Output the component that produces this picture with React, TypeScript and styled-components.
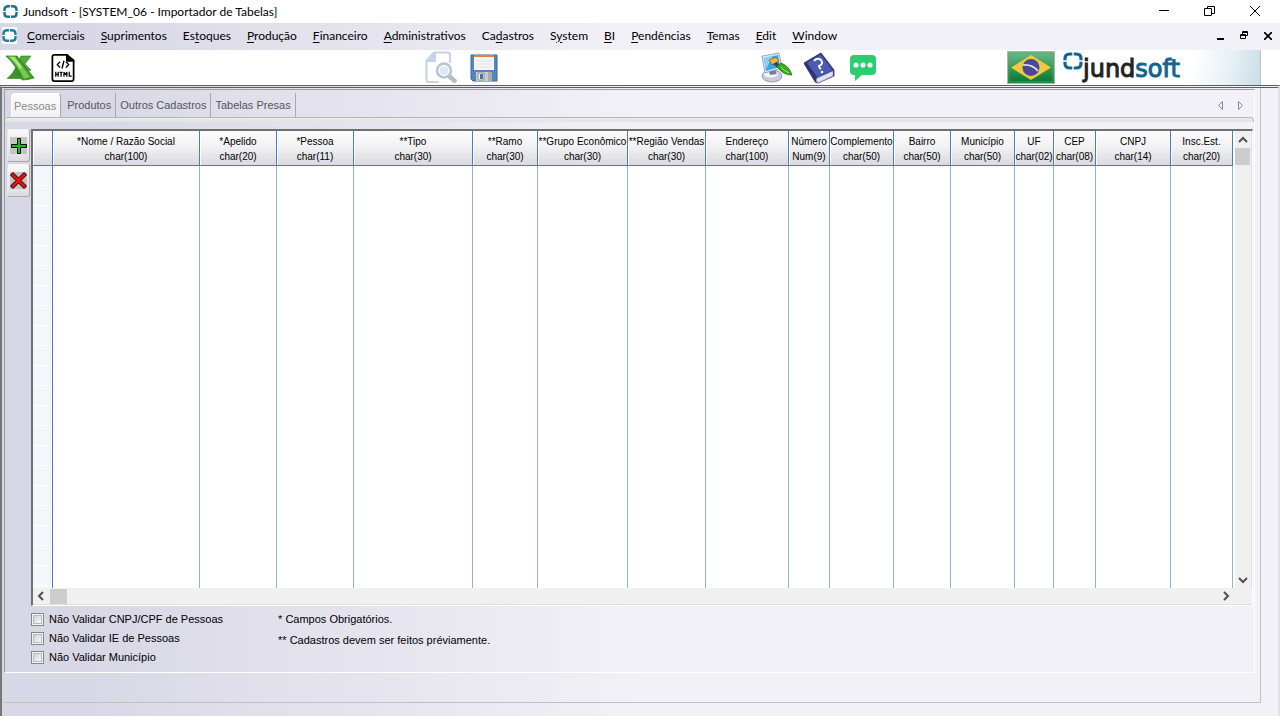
import React from "react";
import styled, { createGlobalStyle } from "styled-components";

const GlobalStyle = createGlobalStyle`
  *, *::before, *::after { box-sizing: border-box; }
  body { margin: 0; background: #f2f1f7; color: #000; }
  button { font: inherit; color: inherit; padding: 0; border: 0; background: none; }
  svg { display: block; }
`;

const uiFont = `Lato, "Noto Sans", sans-serif`;
const gridFont = `"Liberation Sans", Arial, sans-serif`;
const lavender = `linear-gradient(90deg, #d8d7e5 0, #d8d7e5 80px, #f2f1f7 640px)`;

const Page = styled.div`
  display: flex;
  flex-direction: column;
  height: 100vh;
  min-height: 400px;
  overflow: hidden;
`;

const TitleBar = styled.header`
  display: flex;
  align-items: center;
  height: 23px;
  flex: none;
  padding: 0 20px 0 3px;
  gap: 5px;
  background: #fff;
  font: 12px/16px ${uiFont};
`;

const Title = styled.h1`
  flex: 1;
  margin: 0;
  font: inherit;
`;

const WindowButtons = styled.div<{ $gap: number }>`
  display: flex;
  align-items: center;
  gap: ${(p) => p.$gap}px;
`;

const MenuBar = styled.nav`
  display: flex;
  align-items: center;
  height: 27px;
  flex: none;
  padding: 0 8px 2px 2px;
  background: ${lavender};
  font: 12px/16px ${uiFont};
`;

const MenuIcon = styled.span`
  padding: 1px 0;
  background: #fff;
`;

const MenuList = styled.div`
  display: flex;
  flex: 1;
  gap: 16px;
  padding-left: 10px;
`;

const MenuButton = styled.button`
  white-space: nowrap;
  u { text-underline-offset: 2px; }
`;

const ToolBar = styled.div`
  display: grid;
  grid-template-columns: 425fr 336fr 246fr 254px;
  height: 35px;
  flex: none;
  padding-right: 19px;
  background: #fff;
`;

const ToolGroup = styled.div<{ $gap: number; $pad?: number }>`
  display: flex;
  align-items: center;
  gap: ${(p) => p.$gap}px;
  padding-left: ${(p) => p.$pad ?? 0}px;
`;

const Brand = styled.div`
  display: flex;
  align-items: center;
  gap: 8px;
  border-right: 1px solid #c0c0c0;
  background: linear-gradient(100deg, transparent 72%, #e6f0f4 88%, #c8dde6 100%);
`;

const Logo = styled.div`
  display: flex;
  align-items: flex-start;
  height: 33px;
`;

const LogoText = styled.span`
  padding-top: 3px;
  font: 24px/30px "DejaVu Sans", sans-serif;
  color: #222;
  -webkit-text-stroke: 1px #222;
  b { font-weight: 400; color: #13658f; -webkit-text-stroke: 1px #13658f; }
`;

const Workspace = styled.main`
  display: flex;
  flex: 1;
  min-height: 0;
  padding: 0 17px 13px 2px;
  border-top: 3px double #5c5f5e;
  border-left: 2px solid #777;
  border-right: 2px solid #e2e2e6;
  background: ${lavender};
`;

const Outer = styled.div`
  display: flex;
  flex: 1;
  min-width: 0;
  padding: 1px 5px 29px 0;
  border-right: 1px solid #c0c0c0;
  border-bottom: 1px solid #c0c0c0;
`;

const Panel = styled.section`
  display: flex;
  flex-direction: column;
  flex: 1;
  min-width: 0;
  border: 1px solid #9d9da2;
  border-right-color: #fff;
  border-bottom-color: #fff;
`;

const TabStrip = styled.div`
  display: flex;
  align-items: flex-end;
  height: 27px;
  flex: none;
  padding: 0 9px 0 6px;
  font: 11px/14px ${gridFont};
`;

const Tab = styled.button<{ $active?: boolean }>`
  height: 24px;
  padding: 0 4px 0 ${(p) => (p.$active ? 2 : 4)}px;
  margin-right: ${(p) => (p.$active ? 2 : 0)}px;
  border-right: 1px solid #a9a9ad;
  color: ${(p) => (p.$active ? "#8d8a80" : "#55555a")};
  white-space: nowrap;
  ${(p) =>
    p.$active &&
    `border-radius: 4px 4px 0 0; border-top: 1px solid #fff; border-left: 1px solid #fff;
     background: linear-gradient(#fdfdfd, #f1f1f3); box-shadow: 1px 0 0 #d8d8dc;`}
`;

const TabArrows = styled.div`
  display: flex;
  gap: 12px;
  margin-left: auto;
  height: 24px;
  align-items: center;
`;

const TabLine = styled.div`
  height: 5px;
  flex: none;
  border-top: 1px solid #b6b6ba;
  border-right: 1px solid #b6b6ba;
  border-radius: 3px 4px 0 0;
  background: linear-gradient(#ececee, #e2e2e4);
`;

const GridArea = styled.div`
  display: flex;
  flex: 1;
  min-height: 0;
  padding: 7px 1px 0 2px;
`;

const SideButtons = styled.div`
  display: flex;
  flex-direction: column;
  gap: 2px;
  width: 24px;
  padding-right: 1px;
  flex: none;
`;

const SideButton = styled.button`
  display: flex;
  align-items: center;
  justify-content: center;
  height: 33px;
  border: 1px solid #a9a9ad;
  border-top-color: #f4f4f4;
  border-left-color: #e8e8ea;
  border-radius: 3px;
  background: linear-gradient(#f8f8f8, #e9e9ea 60%, #dcdcde);
  svg { background: #c4c4c6; }
`;

const GridFrame = styled.div`
  display: grid;
  grid-template-columns: minmax(0, 1fr) 17px;
  grid-template-rows: minmax(0, 1fr) 17px;
  flex: 1;
  min-width: 0;
  border-style: solid;
  border-width: 2px 1px 1px 2px;
  border-color: #6f6f6f #fff #fff #6f6f6f;
  background: #fff;
`;

const TableClip = styled.div`
  overflow: hidden;
`;

const Table = styled.table`
  table-layout: fixed;
  width: 1200px;
  border-collapse: separate;
  border-spacing: 0;
  font: 10px/15px ${gridFont};
`;

const HeadCell = styled.th`
  height: 35px;
  padding: 1px 0 0;
  border-right: 1px solid #4a7dbd;
  border-bottom: 1px solid #4a7dbd;
  background: linear-gradient(#fcfcfc, #f2f2f4 45%, #d8dade);
  box-shadow: inset 1px 0 0 #fff;
  font-weight: 400;
  text-align: center;
  white-space: pre;
`;

const Cell = styled.td<{ $marker?: boolean }>`
  height: 20px;
  padding: 0;
  border-right: 1px solid ${(p) => (p.$marker ? "#4a7dbd" : "#93b1d8")};
  background: ${(p) => (p.$marker ? "linear-gradient(#f3f7fc 19px, #fff 19px)" : "#fff")};
`;

const ScrollTrack = styled.div<{ $vertical?: boolean }>`
  display: flex;
  align-items: center;
  flex-direction: ${(p) => (p.$vertical ? "column" : "row")};
  grid-column: ${(p) => (p.$vertical ? "2" : "1 / 3")};
  padding-right: ${(p) => (p.$vertical ? 1 : 18)}px;
  background: #f0f0f0;
  ${(p) => (p.$vertical ? "border-right: 1px solid #e0e0e0;" : "border-bottom: 1px solid #e0e0e0;")}
`;

const ScrollArrow = styled.button`
  display: flex;
  align-items: center;
  justify-content: center;
  width: 17px;
  height: 17px;
  flex: none;
`;

const Thumb = styled.div<{ $vertical?: boolean }>`
  width: ${(p) => (p.$vertical ? 15 : 17)}px;
  height: ${(p) => (p.$vertical ? 17 : 15)}px;
  background: #cdcdcd;
`;

const Spacer = styled.div`
  flex: 1;
`;

const Footer = styled.footer`
  display: flex;
  height: 66px;
  flex: none;
  gap: 55px;
  padding: 6px 0 0 26px;
  font: 11px/14px ${gridFont};
`;

const Options = styled.div`
  display: flex;
  flex-direction: column;
  gap: 5px;
`;

const Option = styled.label`
  display: flex;
  align-items: center;
  gap: 5px;
  white-space: nowrap;
`;

const Check = styled.input`
  appearance: none;
  width: 13px;
  height: 13px;
  margin: 0;
  border: 1px solid #85878b;
  background: linear-gradient(135deg, #c3c6cf, #f8f8f8 80%);
  box-shadow: inset 0 0 0 1px #f4f4f4, inset 0 0 0 2px #b8bac2;
`;

const Notes = styled.div`
  display: flex;
  flex-direction: column;
  gap: 7px;
  p { margin: 0; white-space: nowrap; }
`;

const Ring = ({ size, color }: { size: number; color: string }) => (
  <svg width={size} height={size} viewBox="0 0 20 20" fill="none" stroke={color} strokeWidth="3.2">
    <path d="M9.300 3H7Q2 3 2 7.500V9.300M10.700 3H13Q18 3 18 7.500V9.300M2 10.700v1.800q0 4.500 5 4.500H9.300M18 10.700v1.800q0 4.500-5 4.500H10.700" />
  </svg>
);

const ExcelIcon = () => (
  <svg width="28" height="26" viewBox="0 0 28 26">
    <path d="M15 1h10l-6 8 6 6-5 2-9-9z" fill="#55a93c" stroke="#2c7d1f" strokeWidth=".6" />
    <path d="M10 12l7 8-2 3.500H1Q7 19 10 12z" fill="#3c9429" stroke="#2c7d1f" strokeWidth=".6" />
    <path d="M0 1h11l17 22q-6 2-12 2Q10 10 0 1z" fill="#3f9f2b" stroke="#237a1a" strokeWidth=".7" />
    <path d="M2 1.500h7l15 20.500-6 1.500Q12 10 2 1.500z" fill="#7cc654" />
    <path d="M4 2h4l8 10-2 2Q9 6 4 2z" fill="#b4e48e" />
  </svg>
);

const HtmlIcon = () => (
  <svg width="24" height="28" viewBox="0 0 24 29" fill="none" stroke="#000" strokeWidth="1.800" strokeLinejoin="round">
    <path d="M3 1h13l7 6v19q0 2-2 2H3q-2 0-2-2V3q0-2 2-2z" />
    <path d="M16 1v6h7z" fill="#000" />
    <path d="M9 8l-3 3 3 3M15 8l3 3-3 3M13 7l-2 8" strokeWidth="1.400" />
    <path d="M4.500 18.500v5M7 18.500v5M4.500 21H7M8.500 19h3M10 19v4.500M13 23.500V19l1.500 2L16 19v4.500M18.500 18.500V23H21" strokeWidth="1.300" />
  </svg>
);

const PreviewIcon = () => (
  <svg width="32" height="33" viewBox="0 0 32 33" fill="none">
    <path d="M9 1.500h14q2 0 2 2V12M14 31H3.500q-2 0-2-2V10L9 1.500" stroke="#c5d4e8" strokeWidth="2.200" />
    <path d="M11 1v10H1z" fill="#c5d4e8" />
    <path d="M24 25l7 6" stroke="#b4bdc4" strokeWidth="4.500" />
    <circle cx="19" cy="19.500" r="7" fill="#dce8f6" stroke="#bdc5cc" strokeWidth="2.600" />
    <circle cx="19" cy="19.500" r="5" stroke="#fff" strokeWidth="1" />
  </svg>
);

const SaveIcon = () => (
  <svg width="28" height="28" viewBox="0 0 28 28">
    <path d="M1 1h26v26H3l-2-2z" fill="#5584bf" stroke="#3d669e" />
    <path d="M4 1h20v15H4z" fill="#f5f5f5" />
    <path d="M4 1h20v2H4z" fill="#f08020" />
    <path d="M6 7h16M6 10h16M6 13h16" stroke="#e2e4e6" />
    <path d="M6 18h16v9H6z" fill="#c9ccc8" />
    <path d="M8 19h6v7H8z" fill="#eef" stroke="#777" strokeWidth=".7" />
    <path d="M10 20h3v5h-3z" fill="#48719f" />
    <path d="M18 18h4v9h-4z" fill="#aaaea9" />
  </svg>
);

const PaintIcon = () => (
  <svg width="32" height="31" viewBox="0 0 32 31">
    <ellipse cx="11" cy="24" rx="10" ry="6" fill="#c9cadc" stroke="#85869e" strokeWidth=".8" />
    <ellipse cx="10" cy="22" rx="7" ry="3.500" fill="#f5f5fc" />
    <path d="M8 19l6-1 2 4-7 1z" fill="#777a98" />
    <path d="M1 4l17-3 3 15-17 5z" fill="#dae9f5" stroke="#78889a" strokeWidth=".7" />
    <path d="M3 6l14-3 2 12-14 4z" fill="#37a6ee" />
    <path d="M3 6l9-2-7 13z" fill="#85d1ff" />
    <path d="M8 8l7-3 3 4-7 4z" fill="#e4b64a" stroke="#8b5d18" strokeWidth=".8" />
    <path d="M12 12l4-2 3 4-2 2z" fill="#37424f" />
    <path d="M16 14l4-3q8 3 11 12-10 0-15-9z" fill="#3cac20" stroke="#1b6e12" strokeWidth=".8" />
    <path d="M20 15q3 4 8 6" stroke="#a4ea78" fill="none" />
  </svg>
);

const BookIcon = () => (
  <svg width="32" height="32" viewBox="0 0 32 32">
    <path d="M1 11L18 1l13 17v6L15 31q-3 0-4-3z" fill="#35408f" stroke="#23295f" strokeWidth=".8" />
    <path d="M14 26l16-7v5l-15 7q-3-2-1-5z" fill="#e0e2ef" stroke="#8086a8" strokeWidth=".6" />
    <path d="M4 11L18 3l11 15-15 7z" fill="#4e5bb2" />
    <path d="M1 12l3-1 10 14q-3 2-1 5z" fill="#2b347c" />
    <path d="M11 9q3-4 7-1 3 4-2 6 0 2 2 3" fill="none" stroke="#fff" strokeWidth="2" />
    <circle cx="19" cy="20" r="1.300" fill="#fff" />
  </svg>
);

const ChatIcon = () => (
  <svg width="26" height="26" viewBox="0 0 26 26">
    <path d="M4 0h18q4 0 4 4v12q0 4-4 4H12l-7 6v-6H4q-4 0-4-4V4q0-4 4-4z" fill="#2ecc71" />
    <g fill="#ecf0f1">
      <circle cx="6" cy="10" r="2.600" />
      <circle cx="13" cy="10" r="2.600" />
      <circle cx="20" cy="10" r="2.600" />
    </g>
  </svg>
);

const FlagIcon = () => (
  <svg width="48" height="33" viewBox="0 0 48 33">
    <defs>
      <linearGradient id="green" x1="0" y1="0" x2="0" y2="1">
        <stop offset="0" stopColor="#6fbb8b" />
        <stop offset=".5" stopColor="#379a56" />
        <stop offset=".9" stopColor="#0c7c34" />
      </linearGradient>
    </defs>
    <path d="M.5.500h47v32H.500z" fill="url(#green)" stroke="#a9b5ad" />
    <path d="M2 2h44v29H2z" fill="none" stroke="#51a871" strokeWidth=".8" />
    <path d="M4 16.500L24 4l20 12.500L24 29z" fill="#f0ca3c" />
    <circle cx="24" cy="16.500" r="8.500" fill="#49489b" />
    <path d="M16 14q9-1 15 6" stroke="#dfe2f2" strokeWidth="1.600" fill="none" />
  </svg>
);

const Minimize = ({ bold }: { bold?: boolean }) => (
  <svg width={bold ? 7 : 10} height="10" stroke="#000" strokeWidth={bold ? 2 : 1}>
    <path d={bold ? "M0 8h7" : "M0 3.500h10"} />
  </svg>
);

const Restore = ({ bold }: { bold?: boolean }) =>
  bold ? (
    <svg width="8" height="10" fill="none" stroke="#000">
      <path d="M2.500 3V.500h5v4H6M2 1.500h6M.500 3.500h5v4h-5zM0 4.500h6" />
    </svg>
  ) : (
    <svg width="11" height="12" fill="none" stroke="#000">
      <path d="M3.500 2.500V.500h7v7H8M.500 2.500h7v7h-7z" />
    </svg>
  );

const Close = ({ bold }: { bold?: boolean }) => (
  <svg width={bold ? 8 : 10} height={bold ? 8 : 12} viewBox={bold ? "0 0 10 10" : "0 0 10 12"} stroke="#000" strokeWidth={bold ? 2.200 : 1}>
    <path d="M0 0l10 10M10 0L0 10" />
  </svg>
);

const arrows: Record<string, string> = {
  up: "M1 7l4-4 4 4",
  down: "M1 3l4 4 4-4",
  left: "M6 1L2 5l4 4",
  right: "M3 1l4 4-4 4",
};

const Chevron = ({ dir }: { dir: string }) => (
  <svg width="10" height="10" fill="none" stroke="#505050" strokeWidth="2">
    <path d={arrows[dir]} />
  </svg>
);

// Each label is split around its underlined access key.
const menus = [
  ["", "C", "omerciais"],
  ["", "S", "uprimentos"],
  ["Es", "t", "oques"],
  ["", "P", "rodução"],
  ["", "F", "inanceiro"],
  ["", "A", "dministrativos"],
  ["Ca", "d", "astros"],
  ["S", "y", "stem"],
  ["", "B", "I"],
  ["", "P", "endências"],
  ["", "T", "emas"],
  ["", "E", "dit"],
  ["", "W", "indow"],
];

const columns: [string, string, number][] = [
  ["*Nome / Razão Social", "char(100)", 147],
  ["*Apelido", "char(20)", 77],
  ["*Pessoa", "char(11)", 77],
  ["**Tipo", "char(30)", 119],
  ["**Ramo", "char(30)", 65],
  ["**Grupo Econômico", "char(30)", 90],
  ["**Região Vendas", "char(30)", 78],
  ["Endereço", "char(100)", 83],
  ["Número", "Num(9)", 41],
  ["Complemento", "char(50)", 64],
  ["Bairro", "char(50)", 57],
  ["Município", "char(50)", 64],
  ["UF", "char(02)", 39],
  ["CEP", "char(08)", 42],
  ["CNPJ", "char(14)", 75],
  ["Insc.Est.", "char(20)", 62],
];

const rows = Array.from({ length: 60 }, (_, i) => i);
const tabs = ["Pessoas", "Produtos", "Outros Cadastros", "Tabelas Presas"];
const options = ["Não Validar CNPJ/CPF de Pessoas", "Não Validar IE de Pessoas", "Não Validar Município"];

export default function App() {
  return (
    <Page>
      <GlobalStyle />
      <TitleBar>
        <Ring size={15} color="#1d6f94" />
        <Title>Jundsoft - [SYSTEM_06 - Importador de Tabelas]</Title>
        <WindowButtons $gap={35}>
          <button aria-label="Minimizar"><Minimize /></button>
          <button aria-label="Restaurar"><Restore /></button>
          <button aria-label="Fechar"><Close /></button>
        </WindowButtons>
      </TitleBar>
      <MenuBar>
        <MenuIcon><Ring size={15} color="#1d7f9c" /></MenuIcon>
        <MenuList>
          {menus.map(([before, key, after]) => (
            <MenuButton key={before + key + after}>{before}<u>{key}</u>{after}</MenuButton>
          ))}
        </MenuList>
        <WindowButtons $gap={16}>
          <button aria-label="Minimizar janela"><Minimize bold /></button>
          <button aria-label="Restaurar janela"><Restore bold /></button>
          <button aria-label="Fechar janela"><Close bold /></button>
        </WindowButtons>
      </MenuBar>
      <ToolBar>
        <ToolGroup $gap={17} $pad={6}>
          <button aria-label="Excel"><ExcelIcon /></button>
          <button aria-label="HTML"><HtmlIcon /></button>
        </ToolGroup>
        <ToolGroup $gap={13}>
          <button aria-label="Visualizar"><PreviewIcon /></button>
          <button aria-label="Salvar"><SaveIcon /></button>
        </ToolGroup>
        <ToolGroup $gap={10}>
          <button aria-label="Aparência"><PaintIcon /></button>
          <button aria-label="Ajuda"><BookIcon /></button>
          <ToolGroup $gap={0} $pad={5}>
            <button aria-label="Mensagens"><ChatIcon /></button>
          </ToolGroup>
        </ToolGroup>
        <Brand>
          <FlagIcon />
          <Logo>
            <Ring size={20} color="#13658f" />
            <LogoText>jund<b>soft</b></LogoText>
          </Logo>
        </Brand>
      </ToolBar>
      <Workspace>
        <Outer>
          <Panel>
            <TabStrip>
              {tabs.map((t, i) => <Tab key={t} $active={i === 0}>{t}</Tab>)}
              <TabArrows>
                <button aria-label="Abas anteriores">
                  <svg width="8" height="9" fill="none" stroke="#8a8a8e"><path d="M5.500.500v8l-4-4z" /></svg>
                </button>
                <button aria-label="Próximas abas">
                  <svg width="8" height="9" fill="none" stroke="#8a8a8e"><path d="M1.500.500v8l4-4z" /></svg>
                </button>
              </TabArrows>
            </TabStrip>
            <TabLine />
            <GridArea>
              <SideButtons>
                <SideButton aria-label="Adicionar">
                  <svg width="17" height="17" fill="#0fc414" stroke="#000"><path d="M7.500 1.500h3v6h6v3h-6v6h-3v-6h-6v-3h6z" /></svg>
                </SideButton>
                <SideButton aria-label="Excluir">
                  <svg width="17" height="17" fill="#f00d0d" stroke="#000"><path d="M3 .500l5.500 5.500L14 .500 16.500 3 11 8.500l5.500 5.500-2.500 2.500L8.500 11 3 16.500.500 14 6 8.500.500 3z" /></svg>
                </SideButton>
              </SideButtons>
              <GridFrame>
                <TableClip>
                  <Table>
                    <colgroup>
                      <col style={{ width: 20 }} />
                      {columns.map(([name, , width]) => <col key={name} style={{ width }} />)}
                    </colgroup>
                    <thead>
                      <tr>
                        <HeadCell aria-label="Linha" />
                        {columns.map(([name, type]) => <HeadCell key={name}>{name}<br />{type}</HeadCell>)}
                      </tr>
                    </thead>
                    <tbody>
                      {rows.map((r) => (
                        <tr key={r}>
                          <Cell $marker />
                          {columns.map(([name]) => <Cell key={name} />)}
                        </tr>
                      ))}
                    </tbody>
                  </Table>
                </TableClip>
                <ScrollTrack $vertical>
                  <ScrollArrow aria-label="Rolar para cima"><Chevron dir="up" /></ScrollArrow>
                  <Thumb $vertical />
                  <Spacer />
                  <ScrollArrow aria-label="Rolar para baixo"><Chevron dir="down" /></ScrollArrow>
                </ScrollTrack>
                <ScrollTrack>
                  <ScrollArrow aria-label="Rolar para a esquerda"><Chevron dir="left" /></ScrollArrow>
                  <Thumb />
                  <Spacer />
                  <ScrollArrow aria-label="Rolar para a direita"><Chevron dir="right" /></ScrollArrow>
                </ScrollTrack>
              </GridFrame>
            </GridArea>
            <Footer>
              <Options>
                {options.map((o) => <Option key={o}><Check type="checkbox" />{o}</Option>)}
              </Options>
              <Notes>
                <p>* Campos Obrigatórios.</p>
                <p>** Cadastros devem ser feitos préviamente.</p>
              </Notes>
            </Footer>
          </Panel>
        </Outer>
      </Workspace>
    </Page>
  );
}
